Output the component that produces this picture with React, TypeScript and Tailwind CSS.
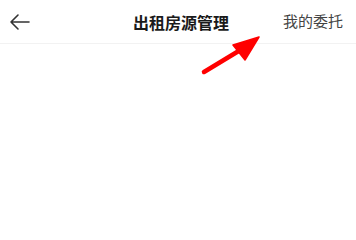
import React from "react";

export default function App() {
  return (
    <div className="relative w-[356px] h-[218px] bg-white overflow-hidden" style={{ fontFamily: '"Noto Sans CJK SC", "Noto Sans", sans-serif' }}>
      <div className="relative flex items-center h-[44px] border-b border-[#f2f2f2]">
        <div className="pl-[9px] flex items-center">
          <svg width="22" height="18" viewBox="0 0 22 18" fill="none" stroke="#333" strokeWidth="1.6" strokeLinecap="round" strokeLinejoin="round">
            <path d="M20 9H2M9 2L2 9l7 7" />
          </svg>
        </div>
        <div className="absolute left-0 right-0 top-0 h-[44px] flex items-center justify-center pointer-events-none">
          <span className="text-[16px] font-bold text-[#1a1a1a] ml-[6px]">出租房源管理</span>
        </div>
        <div className="ml-auto pr-[13px] text-[15px] text-[#444]">我的委托</div>
      </div>
      <svg className="absolute left-0 top-0" width="356" height="218" viewBox="0 0 356 218">
        <line x1="204" y1="72" x2="242" y2="49" stroke="#f00" strokeWidth="4.5" strokeLinecap="round" />
        <polygon points="259,37 233,45 245,60" fill="#f00" stroke="#f00" strokeWidth="1.5" strokeLinejoin="round" />
      </svg>
    </div>
  );
}
